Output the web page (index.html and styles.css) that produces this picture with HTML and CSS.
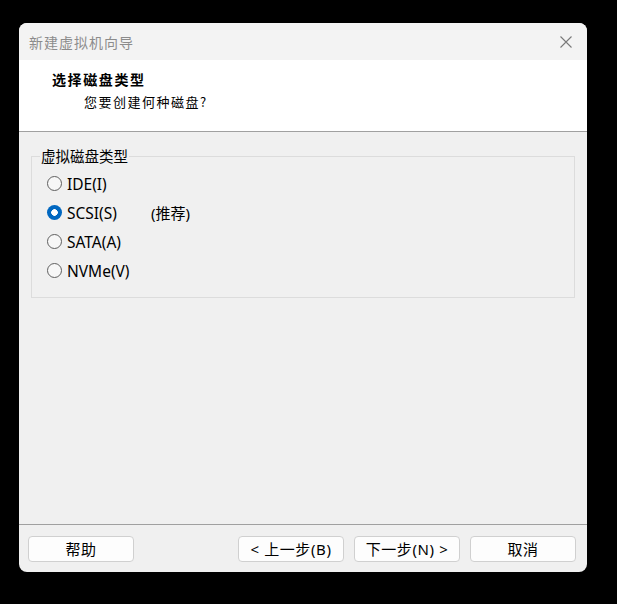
FILE: index.html
```html
<!DOCTYPE html>
<html lang="zh-CN">
<head>
<meta charset="utf-8">
<title>新建虚拟机向导</title>
<link rel="stylesheet" href="styles.css">
</head>
<body>
<div class="window">
  <div class="titlebar">
    <span class="title">新建虚拟机向导</span>
    <svg class="close" width="12" height="12" viewBox="0 0 12 12"><path d="M0.5 0.5 L11.5 11.5 M11.5 0.5 L0.5 11.5" stroke="#7a7a7a" stroke-width="1.1" fill="none"/></svg>
  </div>
  <div class="header">
    <div class="h-title">选择磁盘类型</div>
    <div class="h-sub">您要创建何种磁盘?</div>
  </div>
  <div class="content">
    <fieldset class="group">
      <legend class="legend">虚拟磁盘类型</legend>
      <div class="row"><span class="radio"></span><span class="label">IDE(I)</span></div>
      <div class="row"><span class="radio checked"></span><span class="label">SCSI(S)</span><span class="note">(推荐)</span></div>
      <div class="row"><span class="radio"></span><span class="label">SATA(A)</span></div>
      <div class="row"><span class="radio"></span><span class="label">NVMe(V)</span></div>
    </fieldset>
  </div>
  <div class="footer">
    <button class="btn">帮助</button>
    <span class="spacer"></span>
    <button class="btn">&lt; 上一步(B)</button>
    <button class="btn next">下一步(N) &gt;</button>
    <button class="btn cancel">取消</button>
  </div>
</div>
</body>
</html>
```
FILE: styles.css
```css
* { box-sizing: border-box; }
html, body { margin: 0; padding: 0; background: #000; }
body {
  width: 617px;
  height: 604px;
  padding: 23px 0 0 19px;
  font-family: "Noto Sans", "Noto Sans CJK SC", sans-serif;
}
.window {
  width: 568px;
  height: 549px;
  border-radius: 8px;
  overflow: hidden;
  background: #f0f0f0;
  display: flex;
  flex-direction: column;
}
.titlebar {
  height: 37px;
  flex: none;
  background: #f3f3f3;
  display: flex;
  align-items: center;
  justify-content: space-between;
  padding: 0 15px 0 10px;
}
.title {
  font-family: "Noto Sans CJK SC", sans-serif;
  font-size: 14px;
  letter-spacing: 1px;
  color: #8c8c8c;
}
.header {
  height: 72px;
  flex: none;
  background: #fff;
  border-bottom: 1px solid #a0a0a0;
  padding: 10px 0 0 33px;
  font-family: "Noto Sans CJK SC", sans-serif;
  color: #000;
}
.h-title {
  font-size: 14px;
  font-weight: bold;
  line-height: 18px;
  letter-spacing: 1.6px;
}
.h-sub {
  font-size: 13px;
  line-height: 18px;
  letter-spacing: 1.5px;
  margin: 5px 0 0 32px;
}
.content {
  flex: 1;
  padding: 14px 12px 0 12px;
  border-bottom: 1px solid #a0a0a0;
}
.group {
  margin: 0;
  border: 1px solid #dcdcdc;
  padding: 3px 0 12px 8px;
}
.legend {
  padding: 0 1px;
  margin-left: 0;
  font-family: "Noto Sans CJK SC", sans-serif;
  font-size: 14.5px;
  line-height: 20px;
  color: #000;
}
.row {
  height: 29px;
  display: flex;
  align-items: center;
  padding-left: 7px;
  font-size: 15.5px;
  color: #000;
}
.radio {
  width: 15px;
  height: 15px;
  border-radius: 50%;
  border: 1px solid #5f5f5f;
  background: #f7f7f7;
  margin-right: 5px;
  flex: none;
}
.radio.checked {
  border: none;
  background: radial-gradient(circle, #fff 0 3px, #0067c0 3.6px);
}
.label { width: 84px; }
.note { font-family: "Noto Sans", "Noto Sans CJK SC", sans-serif; font-size: 15px; }
.footer {
  height: 47px;
  flex: none;
  display: flex;
  align-items: flex-start;
  padding: 11px 11px 0 9px;
}
.spacer { flex: 1; }
.btn {
  width: 106px;
  height: 26px;
  background: #fdfdfd;
  border: 1px solid #d0d0d0;
  border-radius: 4px;
  font-family: "Noto Sans", "Noto Sans CJK SC", sans-serif;
  font-size: 15px;
  letter-spacing: 0.6px;
  color: #000;
  padding: 0;
  line-height: 22px;
}
.next { margin-left: 10px; }
.cancel { margin-left: 10px; }
```
